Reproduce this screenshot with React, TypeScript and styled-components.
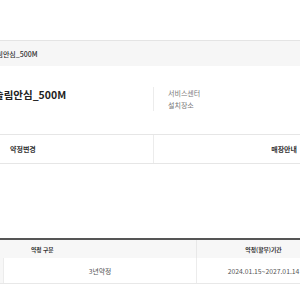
import React from "react";
import styled, { createGlobalStyle } from "styled-components";

const GlobalStyle = createGlobalStyle`
  html, body { margin: 0; padding: 0; background: #fff; }
  body {
    font-family: "Noto Sans CJK KR", "Noto Sans", "Liberation Sans", sans-serif;
    overflow: hidden;
  }
`;

const Page = styled.div`
  width: 300px;
  height: 300px;
  overflow: hidden;
  background: #fff;
`;

const Inner = styled.div`
  width: 310px;
  margin-left: -10px;
`;

const TopSpace = styled.div`
  height: 40px;
`;

const NameBar = styled.div`
  height: 25px;
  border-top: 1px solid #e4e4e4;
  background: #f6f6f6;
  display: flex;
  align-items: center;
  font-size: 7px;
  font-weight: 500;
  color: #333;
`;

const NameText = styled.span`
  margin-left: 0;
  white-space: nowrap;
`;

const InfoRow = styled.div`
  height: 68px;
  box-sizing: border-box;
  padding-top: 21px;
  display: grid;
  grid-template-columns: 163px 1fr;
  align-items: start;
`;

const Title = styled.div`
  font-size: 10.5px;
  line-height: 14px;
  font-weight: 700;
  color: #222;
  padding: 1px 0 0 4px;
  white-space: nowrap;
`;

const InfoList = styled.div`
  border-left: 1px solid #ececec;
  height: 24px;
  padding-left: 14px;
  display: flex;
  flex-direction: column;
  font-size: 7px;
  line-height: 12px;
  color: #777;
`;

const ActionRow = styled.div`
  height: 30px;
  box-sizing: border-box;
  border-top: 1px solid #e6e6e6;
  border-bottom: 1px solid #e6e6e6;
  display: grid;
  grid-template-columns: 163px 1fr;
`;

const ActionCell = styled.div<{ $align: "left" | "right" }>`
  display: flex;
  align-items: center;
  justify-content: ${(p) => (p.$align === "left" ? "flex-start" : "flex-end")};
  padding: ${(p) => (p.$align === "left" ? "0 0 0 20px" : "0 3px 0 0")};
  border-left: ${(p) => (p.$align === "right" ? "1px solid #ececec" : "none")};
  font-size: 7px;
  font-weight: 700;
  color: #333;
`;

const Gap = styled.div`
  height: 74px;
`;

const Table = styled.div`
  width: 340px;
  border-top: 2px solid #555;
`;

const HeadRow = styled.div`
  height: 18px;
  background: #f7f7f7;
  display: grid;
  grid-template-columns: 206px 1fr;
`;

const HeadCell = styled.div<{ $pad?: number }>`
  display: flex;
  align-items: center;
  justify-content: ${(p) => (p.$pad !== undefined ? "flex-start" : "center")};
  padding-left: ${(p) => (p.$pad !== undefined ? `${p.$pad}px` : "0")};
  border-left: ${(p) => (p.$pad !== undefined ? "none" : "1px solid #e8e8e8")};
  font-size: 5.8px;
  font-weight: 700;
  color: #333;
`;

const DataRow = styled.div`
  height: 26px;
  display: grid;
  grid-template-columns: 13px 193px 1fr;
  border-bottom: 1px solid #e8e8e8;
  box-sizing: border-box;
`;

const Strip = styled.div`
  background: #f7f7f7;
`;

const DataCell = styled.div`
  display: flex;
  align-items: center;
  justify-content: center;
  border-left: 1px solid #ececec;
  font-size: 6.8px;
  color: #555;
  white-space: nowrap;
`;

export default function App() {
  return (
    <>
      <GlobalStyle />
      <Page>
        <Inner>
          <TopSpace />
          <NameBar>
            <NameText>슬림안심_500M</NameText>
          </NameBar>
          <InfoRow>
            <Title>슬림안심_500M</Title>
            <InfoList>
              <span>서비스센터</span>
              <span>설치장소</span>
            </InfoList>
          </InfoRow>
          <ActionRow>
            <ActionCell $align="left">약정변경</ActionCell>
            <ActionCell $align="right">매장안내</ActionCell>
          </ActionRow>
          <Gap />
          <Table>
            <HeadRow>
              <HeadCell $pad={41}>약정 구분</HeadCell>
              <HeadCell>약정(할부)기간</HeadCell>
            </HeadRow>
            <DataRow>
              <Strip />
              <DataCell>3년약정</DataCell>
              <DataCell>2024.01.15~2027.01.14</DataCell>
            </DataRow>
          </Table>
        </Inner>
      </Page>
    </>
  );
}
